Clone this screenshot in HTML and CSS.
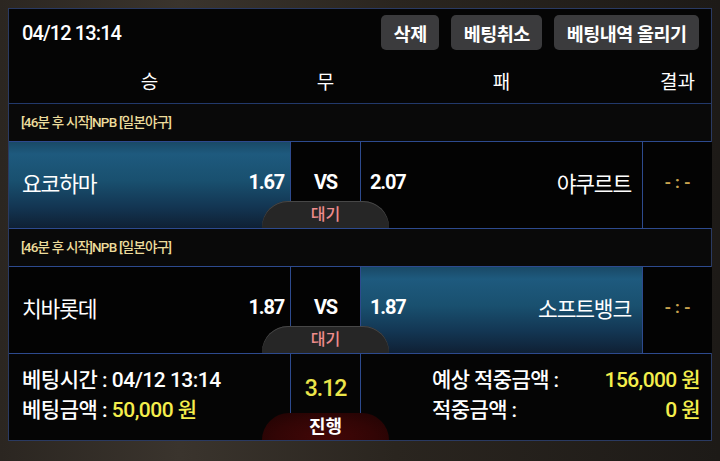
FILE: index.html
```html
<!DOCTYPE html>
<html lang="ko">
<head>
  <meta charset="UTF-8">
  <title>베팅 내역</title>
  <meta name="viewport" content="width=device-width, initial-scale=1">
  <link rel="stylesheet" href="styles.css">
</head>
<body>

  <div class="board">
    <div class="board-head">
      <div class="toolbar">
        <span class="stamp">04/12 13:14</span>
        <div class="actions">
          <button type="button">삭제</button>
          <button type="button">베팅취소</button>
          <button type="button">베팅내역 올리기</button>
        </div>
      </div>
      <div class="cols">
        <span>승</span>
        <span>무</span>
        <span>패</span>
        <span>결과</span>
      </div>
    </div>

    <div class="game">
      <div class="league">[46분 후 시작]NPB [일본야구]</div>
      <div class="line">
        <div class="pick home on"><span class="team">요코하마</span><span class="odds">1.67</span></div>
        <div class="pick draw">VS</div>
        <div class="pick away"><span class="odds">2.07</span><span class="team">야쿠르트</span></div>
        <div class="pick result">-:-</div>
        <span class="state wait">대기</span>
      </div>
    </div>

    <div class="game">
      <div class="league">[46분 후 시작]NPB [일본야구]</div>
      <div class="line">
        <div class="pick home"><span class="team">치바롯데</span><span class="odds">1.87</span></div>
        <div class="pick draw">VS</div>
        <div class="pick away on"><span class="odds">1.87</span><span class="team">소프트뱅크</span></div>
        <div class="pick result">-:-</div>
        <span class="state wait">대기</span>
      </div>
    </div>

    <div class="summary">
      <div class="info">
        <div>베팅시간 : 04/12 13:14</div>
        <div>베팅금액 : <em>50,000 원</em></div>
      </div>
      <div class="total">3.12</div>
      <div class="payout">
        <span>예상 적중금액 :</span><em>156,000 원</em>
        <span>적중금액 :</span><em>0 원</em>
      </div>
      <span class="state live">진행</span>
    </div>
  </div>

</body>
</html>
```

FILE: styles.css
```css
body {
  margin: 0;
  height: 461px;
  overflow: hidden;
  font-family: Roboto, "Noto Sans CJK KR", sans-serif;
  color: #fff;
  background: linear-gradient(90deg, #2b2621 0%, #3a342d 25%, #2a251f 55%, #1d1a17 100%);
}
.board {
  box-sizing: border-box;
  width: 704px;
  margin: 8px 0 0 8px;
  border: 1px solid #2a3a62;
  background: #050505;
}
.toolbar {
  display: flex;
  justify-content: space-between;
  align-items: center;
  height: 41px;
  padding: 6px 12px 0 13px;
  box-sizing: border-box;
}
.stamp {
  font-size: 20px;
  font-weight: 500;
  letter-spacing: -0.9px;
}
.actions {
  display: flex;
  gap: 12px;
}
.actions button {
  height: 35px;
  padding: 0 12.5px;
  border: 0;
  border-radius: 5px;
  background: #3b3b3d;
  color: #fff;
  font-family: inherit;
  font-size: 18.5px;
  font-weight: 700;
  letter-spacing: -0.5px;
}
.cols, .line {
  display: grid;
  grid-template-columns: 281px 69px 281px 69px;
  column-gap: 1px;
}
.cols {
  height: 54px;
  padding-top: 8px;
  box-sizing: border-box;
  align-items: center;
  justify-items: center;
  font-size: 19px;
  border-bottom: 1px solid #22396b;
}
.league {
  height: 37px;
  line-height: 37px;
  padding-left: 12px;
  background: #090909;
  color: #ecdc9c;
  font-size: 13.5px;
  font-weight: 500;
  letter-spacing: -0.8px;
  border-bottom: 1px solid #2d4a8e;
}
.line {
  position: relative;
  height: 86px;
  background: #2d4a8e;
  border-bottom: 1px solid #2d4a8e;
}
.pick {
  display: flex;
  align-items: center;
  justify-content: space-between;
  padding-bottom: 6px;
  background: #030303;
}
.pick.on {
  background: linear-gradient(180deg, #194966 0%, #1e5a7e 14%, #19506f 45%, #133653 75%, #0f2034 100%);
}
.home {
  padding-left: 13px;
  padding-right: 6px;
}
.away {
  padding-left: 9px;
  padding-right: 11px;
}
.team {
  font-size: 21.5px;
  letter-spacing: -1.2px;
}
.odds {
  font-size: 20px;
  font-weight: 700;
  letter-spacing: -1.2px;
}
.draw {
  justify-content: center;
  font-size: 20px;
  font-weight: 700;
  letter-spacing: -1.2px;
}
.result {
  justify-content: center;
  color: #c9a24e;
  font-size: 17px;
  font-weight: 700;
  letter-spacing: 4px;
  padding-left: 4px;
}
.state {
  position: absolute;
  left: 253px;
  bottom: 0;
  width: 127px;
  height: 27px;
  line-height: 27px;
  text-align: center;
  border-radius: 26px 26px 0 0;
}
.wait {
  background: #262626;
  box-shadow: inset 0 1px 0 #474747;
  color: #ee8c8c;
  font-size: 16px;
  font-weight: 500;
}
.summary {
  position: relative;
  display: grid;
  grid-template-columns: 281px 69px 1fr;
  column-gap: 1px;
  height: 86px;
  background: #2d4a8e;
}
.summary > div {
  background: #050505;
}
.summary em {
  font-style: normal;
  color: #f4ee4c;
}
.info {
  padding: 11px 0 0 13px;
  font-size: 21px;
  font-weight: 500;
  line-height: 30px;
  letter-spacing: -0.5px;
}
.total {
  padding-top: 22px;
  text-align: center;
  line-height: 26px;
  font-size: 23px;
  font-weight: 500;
  letter-spacing: -1px;
  color: #ece64a;
}
.payout {
  display: grid;
  grid-template-columns: auto 1fr;
  align-content: start;
  padding: 11px 11px 0 71px;
  font-size: 21px;
  font-weight: 500;
  line-height: 30px;
  letter-spacing: -0.6px;
}
.payout em {
  text-align: right;
}
.live {
  height: 27px;
  background: radial-gradient(ellipse at 50% 90%, #420707 0%, #320505 55%, #1e0303 100%);
  color: #fff;
  font-size: 18px;
  font-weight: 700;
  border-radius: 40px 40px 0 0;
}
```
